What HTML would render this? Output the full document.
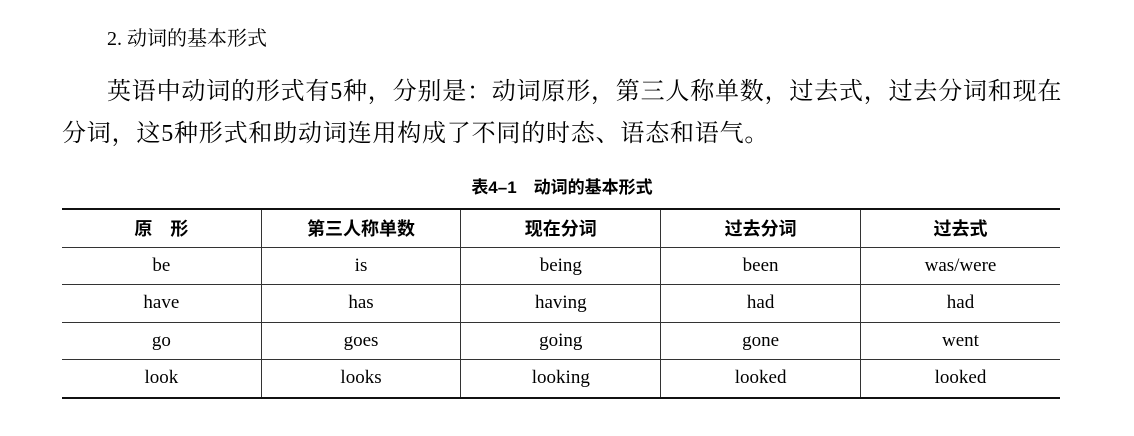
<!DOCTYPE html>
<html><head><meta charset="utf-8"><style>
body{margin:0;background:#fff;width:1134px;height:436px;overflow:hidden;position:relative;color:#000}
.s{font-family:"Liberation Serif","Noto Serif CJK SC",serif}
.h{position:absolute;left:107px;top:22px;font-size:20px}
.p{position:absolute;font-size:24px;letter-spacing:0.8px;white-space:nowrap}
.cap{position:absolute;left:0;width:1124px;text-align:center;top:173px;font-size:17px;font-weight:bold;font-family:"Liberation Sans","Noto Sans CJK SC",sans-serif}
table{position:absolute;left:62px;top:208px;width:998px;border-collapse:collapse;border-top:2px solid #111;border-bottom:2px solid #111}
td,th{border:1px solid #333;height:36.5px;padding:0;text-align:center;font-size:19px;width:200px}
th{font-family:"Liberation Sans","Noto Sans CJK SC",sans-serif;font-weight:bold;font-size:18px}
tr td:first-child,tr th:first-child{border-left:none}
tr td:last-child,tr th:last-child{border-right:none}
</style></head><body>
<div class="h s">2. 动词的基本形式</div>
<div class="p s" style="left:107px;top:71px">英语中动词的形式有5种，分别是：动词原形，第三人称单数，过去式，过去分词和现在</div>
<div class="p s" style="left:62px;top:113px">分词，这5种形式和助动词连用构成了不同的时态、语态和语气。</div>
<div class="cap">表4–1　动词的基本形式</div>
<table class="s">
<tr><th>原　形</th><th>第三人称单数</th><th>现在分词</th><th>过去分词</th><th>过去式</th></tr>
<tr><td>be</td><td>is</td><td>being</td><td>been</td><td>was/were</td></tr>
<tr><td>have</td><td>has</td><td>having</td><td>had</td><td>had</td></tr>
<tr><td>go</td><td>goes</td><td>going</td><td>gone</td><td>went</td></tr>
<tr><td>look</td><td>looks</td><td>looking</td><td>looked</td><td>looked</td></tr>
</table>
</body></html>
